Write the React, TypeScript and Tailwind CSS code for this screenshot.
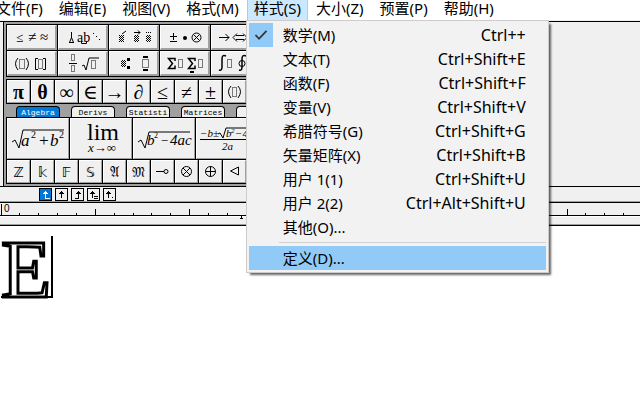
import React from "react";

const UI = "font-['Noto_Sans','Noto_Sans_CJK_SC',sans-serif]";
const SERIF = "font-['Liberation_Serif',serif]";

type Entry = { label: string; keys?: string; checked?: boolean };

const styleMenu: Entry[] = [
  { label: "数学(M)", keys: "Ctrl++", checked: true },
  { label: "文本(T)", keys: "Ctrl+Shift+E" },
  { label: "函数(F)", keys: "Ctrl+Shift+F" },
  { label: "变量(V)", keys: "Ctrl+Shift+V" },
  { label: "希腊符号(G)", keys: "Ctrl+Shift+G" },
  { label: "矢量矩阵(X)", keys: "Ctrl+Shift+B" },
  { label: "用户 1(1)", keys: "Ctrl+Shift+U" },
  { label: "用户 2(2)", keys: "Ctrl+Alt+Shift+U" },
  { label: "其他(O)..." },
];

function MenuRow({ label, keys, checked }: Entry) {
  return (
    <button role="menuitem" className="flex h-6 w-full items-center pr-5 text-left whitespace-nowrap">
      <span className={`mr-[10px] flex size-6 items-center justify-center ${checked ? "bg-[#91c9f7]" : ""}`}>
        {checked && (
          <svg width="14" height="12" viewBox="0 0 14 12" fill="none" stroke="#333" strokeWidth="1.8">
            <path d="M1.5 6 L5 9.8 L12.5 1.8" />
          </svg>
        )}
      </span>
      <span className="flex-1">{label}</span>
      {keys && <span className="text-base">{keys}</span>}
    </button>
  );
}

function StyleMenu() {
  return (
    <div
      role="menu"
      className="absolute top-5 -left-px z-10 w-[303px] border border-[#ccc] bg-[#f2f2f2] p-0.5 shadow-[3px_3px_2px_-1px_rgba(0,0,0,0.6)]"
    >
      {styleMenu.map((e) => (
        <MenuRow key={e.label} {...e} />
      ))}
      <hr className="mt-[3px] mb-[3px] ml-[30px] border-[#d0d0d0]" />
      <button role="menuitem" className="flex h-6 w-full items-center bg-[#91c9f7] pl-[34px] text-left">
        定义(D)...
      </button>
    </div>
  );
}

function MenuBar() {
  const item = "h-5 px-2 pb-[3px] leading-[17px] whitespace-nowrap";
  return (
    <nav className="-ml-3 flex h-5 bg-white">
      <button className={item}>文件(F)</button>
      <button className={item}>编辑(E)</button>
      <button className={item}>视图(V)</button>
      <button className={item}>格式(M)</button>
      <div className="relative">
        <button className="block h-5 border-x border-[#99d1ff] bg-[#cce8ff] px-1.5 pb-[3px] leading-[17px] whitespace-nowrap">
          样式(S)
        </button>
        <StyleMenu />
      </div>
      <button className={item}>大小(Z)</button>
      <button className={item}>预置(P)</button>
      <button className={item}>帮助(H)</button>
    </nav>
  );
}

const BEVEL = "flex items-center justify-center bg-[#f0f0f0] border-t border-l border-t-white border-l-white border-b-[#a0a0a0] border-r-[#a0a0a0]";

function Slot({ x, y, w = 5, h = 10 }: { x: number; y: number; w?: number; h?: number }) {
  return (
    <rect x={x + 0.5} y={y + 0.5} width={w} height={h} fill="none" stroke="#000" strokeDasharray="1 1" />
  );
}

function Filled({ x, y, w = 5, h = 7 }: { x: number; y: number; w?: number; h?: number }) {
  return <rect x={x} y={y} width={w} height={h} fill="url(#hatch)" />;
}

function T({ x, y, s = 14, children, sans }: { x: number; y: number; s?: number; children: string; sans?: boolean }) {
  return (
    <text x={x} y={y} fontSize={s} className={sans ? "font-['DejaVu_Sans',sans-serif]" : "font-['Liberation_Serif',serif]"}>
      {children}
    </text>
  );
}

const templates: { name: string; art: React.ReactNode }[] = [
  {
    name: "关系符号",
    art: (
      <>
        <T x={9} y={17} s={13}>≤</T>
        <T x={21} y={17} s={15}>≠</T>
        <T x={33} y={17} s={15}>≈</T>
      </>
    ),
  },
  {
    name: "间距",
    art: (
      <>
        <path d="M13.5 7v6M11.5 17.5l2-5l2 5z" fill="none" stroke="#000" />
        <path d="M11 17.5h5" stroke="#000" />
        <T x={19} y={17} s={14}>ab</T>
        <path d="M23.500 16v2.500h5v-2.500" fill="none" stroke="#000" />
        <path d="M35 8h1v1h-1zM38 11h1v1h-1zM41 14h1v1h-1z" />
      </>
    ),
  },
  {
    name: "修饰",
    art: (
      <>
        <Filled x={10} y={10} />
        <path d="M13 9l4-3M25 7.500h6M29 5.500l2 2l-2 2" fill="none" stroke="#000" />
        <Filled x={25} y={10} />
        <Filled x={37} y={10} />
        <path d="M37 7.500h6" stroke="#000" strokeDasharray="1 1" />
      </>
    ),
  },
  {
    name: "运算符号",
    art: (
      <>
        <path d="M10 11.500h7M13.500 8v7M10 16.500h7" stroke="#000" />
        <circle cx="25" cy="13" r="2" />
        <g fill="none" stroke="#000">
          <circle cx="36.500" cy="12.500" r="4.500" />
          <path d="M33.500 9.500l6 6M39.500 9.500l-6 6" />
        </g>
      </>
    ),
  },
  {
    name: "箭头",
    art: (
      <g fill="none" stroke="#000">
        <path d="M8 12.500h10M14.500 9l3.500 3.500l-3.500 3.500" />
        <path d="M25 10.500h8M25 14.500h8M26 8.500l-4 4l4 4M32 8.500l4 4l-4 4" />
      </g>
    ),
  },
  {
    name: "括号",
    art: (
      <>
        <path d="M11 7q-5 5.500 0 12M19 7q5 5.500 0 12M31 7.500h-2.500v11h2.500M36 7.500h2.500v11h-2.500" fill="none" stroke="#000" />
        <Slot x={12} y={8} h={9} />
        <Slot x={31} y={8} w={4} h={9} />
      </>
    ),
  },
  {
    name: "分式和根式",
    art: (
      <>
        <Slot x={13} y={3} w={3} h={6} />
        <Slot x={13} y={14} w={3} h={6} />
        <path d="M11 12.500h8M24 15l2-1l2 5l3-12h10" fill="none" stroke="#000" />
        <Slot x={33} y={9} w={4} h={8} />
      </>
    ),
  },
  {
    name: "上标和下标",
    art: (
      <>
        <Filled x={12} y={9} />
        <path d="M18 7h3v3h-3zM18 15h3v3h-3zM34 5h5v2h-5zM34 18h5v2h-5z" />
        <Slot x={33} y={8} w={6} h={8} />
      </>
    ),
  },
  {
    name: "求和",
    art: (
      <>
        <path d="M15 10v-2.500h-6.500l4 5l-4 5h6.500v-3M35 10v-2.500h-6.500l4 5l-4 5h6.500v-3" fill="none" stroke="#000" strokeWidth="1.500" />
        <Slot x={18} y={8} w={4} h={8} />
        <path d="M30 20h4v2h-4z" />
        <Slot x={38} y={8} w={4} h={8} />
      </>
    ),
  },
  {
    name: "积分",
    art: (
      <>
        <path d="M15 5q-4-2-4 3v8q0 4-3 3M35 5q-4-2-4 3v8q0 4-3 3" fill="none" stroke="#000" strokeWidth="1.500" />
        <circle cx="31" cy="12.500" r="3" fill="none" stroke="#000" />
        <Slot x={16} y={8} w={4} h={8} />
      </>
    ),
  },
];

const symbols = ["π", "θ", "∞", "∈", "→", "∂", "≤", "≠", "±"];
const letters = ["ℤ", "𝕜", "𝔽", "𝕊", "𝔄", "𝔐"];
const tabs = ["Algebra", "Derivs", "Statisti", "Matrices", ""];

const operators = [
  { name: "多重映射", art: <path d="M2 8.500h8M14 8.500a2 2 0 1 1-4 0a2 2 0 1 1 4 0" /> },
  { name: "张量积", art: <path d="M13.500 8.500a5 5 0 1 1-10 0a5 5 0 1 1 10 0M5 5l7 7M12 5l-7 7" /> },
  { name: "直和", art: <path d="M13.500 8.500a5 5 0 1 1-10 0a5 5 0 1 1 10 0M8.500 3.500v10M3.500 8.500h10" /> },
  { name: "正规子群", art: <path d="M12.500 4v8l-8-4z" /> },
];

const formulas: { name: string; art: React.ReactNode }[] = [
  {
    name: "a² + b² 的平方根",
    art: (
      <>
        <path d="M5 24l3-2l4 8l4-18h41" fill="none" stroke="#000" />
        <text y="28" fontSize="17" className="font-['Liberation_Serif',serif] italic">
          <tspan x="14">a</tspan>
          <tspan x="24" y="20" fontSize="10" fontStyle="normal">2</tspan>
          <tspan x="31" y="28">+</tspan>
          <tspan x="43">b</tspan>
          <tspan x="52" y="20" fontSize="10" fontStyle="normal">2</tspan>
        </text>
      </>
    ),
  },
  {
    name: "极限",
    art: (
      <>
        <T x={17} y={22} s={24}>lim</T>
        <text x="18" y="34" fontSize="13" className="font-['Liberation_Serif',serif]">
          <tspan fontStyle="italic">x</tspan>→∞
        </text>
      </>
    ),
  },
  {
    name: "判别式的平方根",
    art: (
      <>
        <path d="M5 24l3-2l4 8l4-16h41" fill="none" stroke="#000" />
        <text y="27" fontSize="15" className="font-['Liberation_Serif',serif] italic">
          <tspan x="14">b</tspan>
          <tspan x="21" y="20" fontSize="8" fontStyle="normal">2</tspan>
          <tspan x="27">{" "}</tspan>
          <tspan x="27" y="27" fontSize="13">−</tspan>
          <tspan x="37" fontSize="15">4ac</tspan>
        </text>
      </>
    ),
  },
  {
    name: "求根公式",
    art: (
      <>
        <path d="M4 21.500h54M22 16l2-1l3 5l3-10h28" fill="none" stroke="#000" />
        <text y="19" fontSize="11" className="font-['Liberation_Serif',serif] italic">
          <tspan x="4">−b±</tspan>
          <tspan x="30">b</tspan>
          <tspan x="35" y="15" fontSize="7">2</tspan>
          <tspan x="39" y="19">−4ac</tspan>
          <tspan x="26" y="32">2a</tspan>
        </text>
      </>
    ),
  },
];

function Palette() {
  return (
    <div className="flex w-[264px] flex-col items-start border-l border-black bg-[#a0a0a0] pt-0.5 pb-0.5 pl-0.5">
      <div className="grid grid-cols-5 gap-px bg-black p-px">
        {templates.map((t) => (
          <button key={t.name} aria-label={t.name} className={`${BEVEL} h-[25px] w-[50px] border-r-2 border-b-2`}>
            <svg width="47" height="22" viewBox="1 1 47 22">{t.art}</svg>
          </button>
        ))}
      </div>
      <div className="mt-0.5 flex gap-px bg-black p-px">
        {symbols.map((s, i) => (
          <button
            key={s}
            className={`${BEVEL} h-[23px] w-[23px] border-r border-b font-['Liberation_Serif','DejaVu_Serif',serif] text-xl leading-5 ${
              i < 2 || i === 5 ? "font-bold" : ""
            }`}
          >
            {s}
          </button>
        ))}
        <button aria-label="圆括号" className={`${BEVEL} h-[23px] w-[23px] border-r border-b`}>
          <svg width="18" height="16" viewBox="0 0 18 16">
            <path d="M5 2q-5 5.500 0 12M12 2q5 5.500 0 12" fill="none" stroke="#000" />
            <Slot x={6} y={3} w={4} h={9} />
          </svg>
        </button>
      </div>
      <div role="tablist" className="ml-2.5 flex h-[13px] items-end gap-[11px]">
        {tabs.map((t, i) => (
          <button
            key={i}
            role="tab"
            aria-selected={i === 0}
            aria-label={t || "更多"}
            className={`h-[11px] w-11 overflow-hidden rounded-t border-x border-t border-black text-center font-['Liberation_Mono',monospace] text-[8px] leading-[11px] ${
              i === 0 ? "bg-[#0078d7] text-white" : "bg-[#f0f0f0]"
            }`}
          >
            {t}
          </button>
        ))}
      </div>
      <div className="flex gap-px bg-black p-px">
        {formulas.map((f) => (
          <button key={f.name} aria-label={f.name} className={`${BEVEL} h-[41px] w-[62px] border-r border-b`}>
            <svg width="60" height="39" viewBox="1 1 60 39">{f.art}</svg>
          </button>
        ))}
      </div>
      <div className="flex gap-px bg-black px-px pb-px">
        {letters.map((s) => (
          <button
            key={s}
            className={`${BEVEL} h-[23px] w-[23px] border-r border-b font-['DejaVu_Sans','DejaVu_Serif',sans-serif] text-sm leading-5`}
          >
            {s}
          </button>
        ))}
        {operators.map((o) => (
          <button key={o.name} aria-label={o.name} className={`${BEVEL} h-[23px] w-[23px] border-r border-b`}>
            <svg width="17" height="17" viewBox="0 0 17 17" fill="none" stroke="#000">{o.art}</svg>
          </button>
        ))}
      </div>
    </div>
  );
}

const tabStops = [
  { name: "左对齐", d: "M5.500 2v7h4M3 4.500h5M4 3.500h3" },
  { name: "居中", d: "M5.500 2v7M3 4.500h5M4 3.500h3" },
  { name: "右对齐", d: "M6.500 2v7h-4M4 4.500h5M5 3.500h3" },
  { name: "等号对齐", d: "M4.500 2v7M2 4.500h5M3 3.500h3M6 7.500h4M6 9.500h4" },
  { name: "小数点对齐", d: "M4.500 2v7M2 4.500h5M3 3.500h3M8 8.500h1" },
];

function TabStops() {
  return (
    <div className="flex h-4 items-center gap-[3px] border-b border-black pl-[39px] shadow-[inset_0_-1px_0_#a0a0a0]">
      {tabStops.map((t, i) => (
        <button
          key={t.name}
          aria-label={t.name}
          className={`size-[13px] border border-black ${i === 0 ? "bg-[#0078d7]" : "bg-[#f0f0f0]"}`}
        >
          <svg width="11" height="11" viewBox="0 0 11 11" shapeRendering="crispEdges" fill="none" stroke={i === 0 ? "#fff" : "#000"}>
            <path d={t.d} />
          </svg>
        </button>
      ))}
    </div>
  );
}

function Ruler() {
  const marks = Array.from({ length: 90 }, (_, i) => i + 1);
  return (
    <div className="border-b border-black shadow-[inset_0_-1px_0_#a0a0a0]">
      <svg className="block h-[22px] w-full" shapeRendering="crispEdges">
        <path d="M1 1h1v11h-1z" />
        <text x="4" y="9" fontSize="10" className="font-['Liberation_Sans',sans-serif]">0</text>
        {marks.map((i) => (
          <rect key={i} x={Math.round(0.5 + i * 18.87)} y={i % 5 ? 10 : 6} width="1" height={i % 5 ? 3 : 7} />
        ))}
        <rect x="0" y="12" width="100%" height="1" />
        <rect x="0" y="13" width="100%" height="1" fill="#fff" />
        <path d="M241 13h1v2h-1zM240 15h3v1h-3z" />
      </svg>
    </div>
  );
}

export default function App() {
  return (
    <div className={`min-h-screen overflow-hidden bg-white text-[15px] text-black ${UI}`}>
      <svg className="absolute size-0" aria-hidden="true">
        <pattern id="hatch" width="2" height="2" patternUnits="userSpaceOnUse">
          <path d="M0 0h1v1h-1zM1 1h1v1h-1z" />
        </pattern>
      </svg>
      <MenuBar />
      <header className="bg-[#f0f0f0] pt-px">
        <div className="border-y border-black pl-[3px]">
          <Palette />
        </div>
        <TabStops />
        <Ruler />
      </header>
      <main className="pt-2.5 pl-px">
        <div className={`inline-flex h-[62px] items-end border-r-2 border-b-2 border-black ${SERIF}`}>
          <span className="h-[62px] text-[82px] leading-[72px] text-white [-webkit-text-stroke:3px_black]">E</span>
        </div>
      </main>
    </div>
  );
}
